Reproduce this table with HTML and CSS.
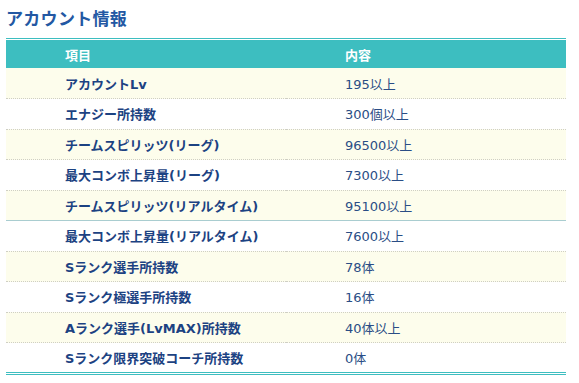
FILE: index.html
```html
<!DOCTYPE html>
<html lang="ja">
<head>
<meta charset="utf-8">
<link rel="stylesheet" href="styles.css">
</head>
<body>
<h2 class="title">アカウント情報</h2>
<table class="info">
  <thead>
    <tr><th>項目</th><th>内容</th></tr>
  </thead>
  <tbody>
    <tr class="odd"><td class="k">アカウントLv</td><td class="v">195以上</td></tr>
    <tr><td class="k">エナジー所持数</td><td class="v">300個以上</td></tr>
    <tr class="odd"><td class="k">チームスピリッツ(リーグ)</td><td class="v">96500以上</td></tr>
    <tr><td class="k">最大コンボ上昇量(リーグ)</td><td class="v">7300以上</td></tr>
    <tr class="odd solid"><td class="k">チームスピリッツ(リアルタイム)</td><td class="v">95100以上</td></tr>
    <tr><td class="k">最大コンボ上昇量(リアルタイム)</td><td class="v">7600以上</td></tr>
    <tr class="odd"><td class="k">Sランク選手所持数</td><td class="v">78体</td></tr>
    <tr><td class="k">Sランク極選手所持数</td><td class="v">16体</td></tr>
    <tr class="odd"><td class="k">Aランク選手(LvMAX)所持数</td><td class="v">40体以上</td></tr>
    <tr class="last"><td class="k">Sランク限界突破コーチ所持数</td><td class="v">0体</td></tr>
  </tbody>
</table>
</body>
</html>
```
FILE: styles.css
```css
html, body {
  margin: 0;
  padding: 0;
  background: #ffffff;
}
body {
  padding: 6px 13px 0 6px;
  font-family: "DejaVu Sans", "Noto Sans CJK JP", sans-serif;
}
.title {
  margin: 0 0 9px 0;
  font-size: 17px;
  line-height: 23px;
  font-weight: bold;
  color: #2358a3;
  font-family: "Noto Sans CJK JP", sans-serif;
  letter-spacing: 0.3px;
}
.info {
  width: 560px;
  border-collapse: collapse;
  border-top: 3px double #3dbec0;
  border-bottom: 3px double #3dbec0;
  font-size: 13px;
}
.info th {
  background: #3dbec0;
  color: #ffffff;
  text-align: left;
  font-weight: bold;
  height: 27px;
  padding: 0 0 0 59px;
  width: 50%;
  font-family: "Noto Sans CJK JP", sans-serif;
  font-size: 13px;
}
.info td {
  height: 30.5px;
  padding: 0 0 0 59px;
  border-bottom: 1px dotted #cfcfc4;
  color: #1d4380;
  box-sizing: border-box;
}
.info tr.odd td {
  background: #fdfdec;
}
.info tr.solid td {
  border-bottom: 1px solid #a9cdd0;
}
.info tr.last td {
  border-bottom: none;
}
.info td.k {
  font-weight: bold;
  color: #1c4282;
}
.info td.v {
  color: #2a4d85;
}
```
